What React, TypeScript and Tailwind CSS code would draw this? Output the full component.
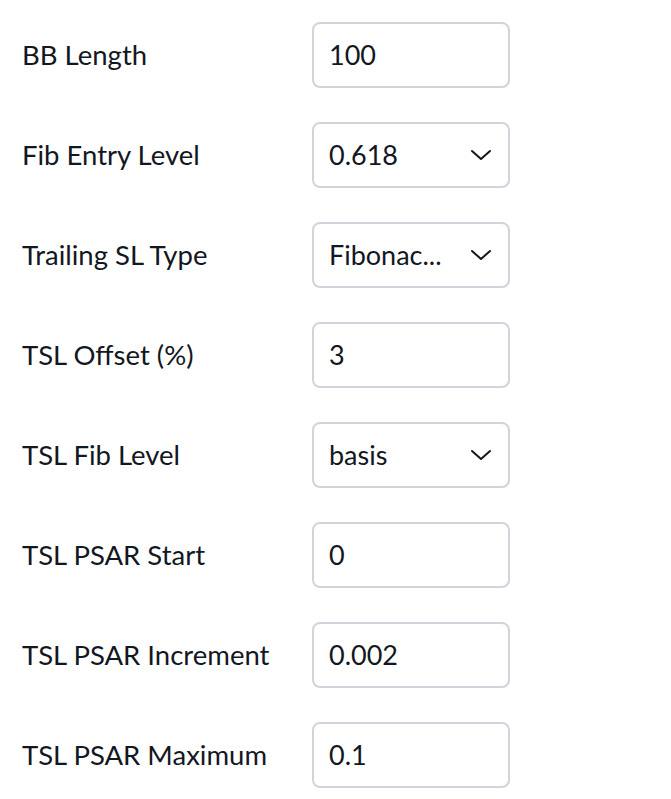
const rows: { label: string; value: string; select?: boolean }[] = [
  { label: "BB Length", value: "100" },
  { label: "Fib Entry Level", value: "0.618", select: true },
  { label: "Trailing SL Type", value: "Fibonac...", select: true },
  { label: "TSL Offset (%)", value: "3" },
  { label: "TSL Fib Level", value: "basis", select: true },
  { label: "TSL PSAR Start", value: "0" },
  { label: "TSL PSAR Increment", value: "0.002" },
  { label: "TSL PSAR Maximum", value: "0.1" },
];

const Chevron = () => (
  <svg width="22" height="12" viewBox="0 0 22 12" fill="none" className="shrink-0">
    <path d="M2 2l9 8 9-8" stroke="#131722" strokeWidth="2" strokeLinecap="round" strokeLinejoin="round" />
  </svg>
);

export default function App() {
  return (
    <div className="min-h-screen bg-white text-[#131722] font-['Lato',sans-serif] flex flex-col gap-[34px] pt-[22px] pl-[22px]">
      {rows.map((r) => (
        <div key={r.label} className="flex items-center">
          <div className="w-[290px] text-[27.5px] leading-none">{r.label}</div>
          <div className="w-[198px] h-[66px] border-2 border-[#d1d4dc] rounded-[8px] flex items-center justify-between pl-[15px] pr-[16px] text-[27px]">
            <span>{r.value}</span>
            {r.select && <Chevron />}
          </div>
        </div>
      ))}
    </div>
  );
}
